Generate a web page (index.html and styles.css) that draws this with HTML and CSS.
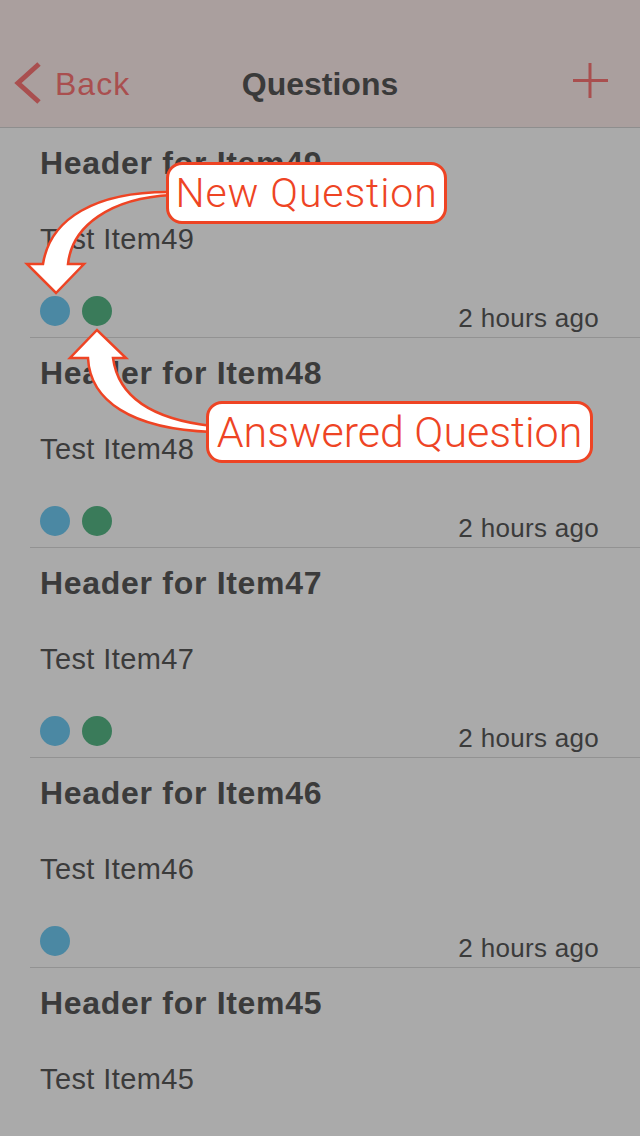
FILE: index.html
```html
<!DOCTYPE html>
<html>
<head>
<meta charset="utf-8">
<link rel="stylesheet" href="styles.css">
</head>
<body>
<div class="screen">
  <header class="nav">
    <div class="nav-left">
      <svg class="chev" width="32" height="44" viewBox="0 0 32 44"><polyline points="27,3 6,22 27,41" fill="none" stroke="#a94f4f" stroke-width="5"/></svg>
      <span class="back">Back</span>
    </div>
    <div class="nav-title">Questions</div>
    <div class="nav-right">
      <svg width="40" height="40" viewBox="0 0 40 40"><line x1="20" y1="2" x2="20" y2="37" stroke="#a94f4f" stroke-width="3"/><line x1="3" y1="19.5" x2="38" y2="19.5" stroke="#a94f4f" stroke-width="3"/></svg>
    </div>
  </header>
  <main class="list">
    <div class="row">
      <div class="row-head">Header for Item49</div>
      <div class="row-body">Test Item49</div>
      <div class="row-foot"><div class="dots"><span class="dot blue"></span><span class="dot green"></span></div><span class="time">2 hours ago</span></div>
    </div>
    <div class="row">
      <div class="row-head">Header for Item48</div>
      <div class="row-body">Test Item48</div>
      <div class="row-foot"><div class="dots"><span class="dot blue"></span><span class="dot green"></span></div><span class="time">2 hours ago</span></div>
    </div>
    <div class="row">
      <div class="row-head">Header for Item47</div>
      <div class="row-body">Test Item47</div>
      <div class="row-foot"><div class="dots"><span class="dot blue"></span><span class="dot green"></span></div><span class="time">2 hours ago</span></div>
    </div>
    <div class="row">
      <div class="row-head">Header for Item46</div>
      <div class="row-body">Test Item46</div>
      <div class="row-foot"><div class="dots"><span class="dot blue"></span></div><span class="time">2 hours ago</span></div>
    </div>
    <div class="row">
      <div class="row-head">Header for Item45</div>
      <div class="row-body">Test Item45</div>
    </div>
  </main>
  <svg class="arrows" width="640" height="1136" viewBox="0 0 640 1136">
    <path d="M172,192 C95,191 50,219 43,264 L27,264 L56,293 L84,264 L68,264 C72,226 110,198 172,195 Z" fill="#fff" stroke="#ee4424" stroke-width="2.5" stroke-linejoin="miter"/>
    <path d="M212,432 C130,429 90,400 88,358 L70,358 L97,330 L126,358 L113,358 C118,395 150,419 212,426 Z" fill="#fff" stroke="#ee4424" stroke-width="2.5" stroke-linejoin="miter"/>
  </svg>
  <div class="callout callout-new">New Question</div>
  <div class="callout callout-answered">Answered Question</div>
</div>
</body>
</html>
```
FILE: styles.css
```css
html, body {
  margin: 0;
  padding: 0;
}
body {
  background: #aaaaaa;
  font-family: "Liberation Sans", Arial, sans-serif;
  color: #3b3b3b;
}
.screen {
  position: relative;
  width: 640px;
  height: 1136px;
  overflow: hidden;
  background: #aaaaaa;
}
.nav {
  box-sizing: border-box;
  height: 128px;
  padding-top: 41px;
  background: #aa9f9e;
  border-bottom: 1px solid #8e8e8e;
  display: grid;
  grid-template-columns: 1fr auto 1fr;
  align-items: center;
}
.nav-left {
  display: flex;
  align-items: center;
  padding-left: 12px;
  height: 86px;
}
.chev {
  display: block;
  margin-top: -2px;
}
.back {
  font-size: 32px;
  line-height: 86px;
  color: #a94f4f;
  margin-left: 11px;
  letter-spacing: 1px;
}
.nav-title {
  font-size: 32px;
  font-weight: bold;
  line-height: 86px;
  color: #3a3a3a;
}
.nav-right {
  justify-self: end;
  padding-right: 30px;
  display: flex;
  align-items: center;
}
.nav-right svg {
  display: block;
  margin-top: -7px;
}
.list {
  display: flex;
  flex-direction: column;
}
.row {
  box-sizing: border-box;
  height: 210px;
  flex-shrink: 0;
  margin-left: 30px;
  padding: 17px 41px 0 10px;
  border-bottom: 1px solid #929292;
  display: flex;
  flex-direction: column;
}
.row-head {
  font-size: 32px;
  font-weight: bold;
  line-height: 36px;
  letter-spacing: 0.7px;
}
.row-body {
  margin-top: 41px;
  font-size: 29px;
  line-height: 34px;
  letter-spacing: 0.4px;
}
.row-foot {
  margin-top: 40px;
  display: flex;
  justify-content: space-between;
  align-items: flex-start;
}
.dots {
  display: flex;
  gap: 12px;
}
.dot {
  display: block;
  width: 30px;
  height: 30px;
  border-radius: 50%;
}
.blue { background: #4b88a3; }
.green { background: #3a7b5a; }
.time {
  margin-top: 7px;
  font-size: 26px;
  line-height: 30px;
  letter-spacing: 0.3px;
}
.arrows {
  position: absolute;
  left: 0;
  top: 0;
  pointer-events: none;
}
.callout {
  position: absolute;
  box-sizing: border-box;
  height: 62px;
  background: #ffffff;
  border: 3px solid #ee4424;
  border-radius: 16px;
  color: #ee4424;
  font-family: Roboto, "Liberation Sans", sans-serif;
  font-weight: 300;
  display: flex;
  align-items: center;
  justify-content: center;
  white-space: nowrap;
}
.callout-new {
  left: 166px;
  top: 162px;
  width: 281px;
  font-size: 41px;
  letter-spacing: 0.9px;
}
.callout-answered {
  left: 206px;
  top: 401px;
  width: 387px;
  font-size: 43px;
  letter-spacing: 0px;
}
```
